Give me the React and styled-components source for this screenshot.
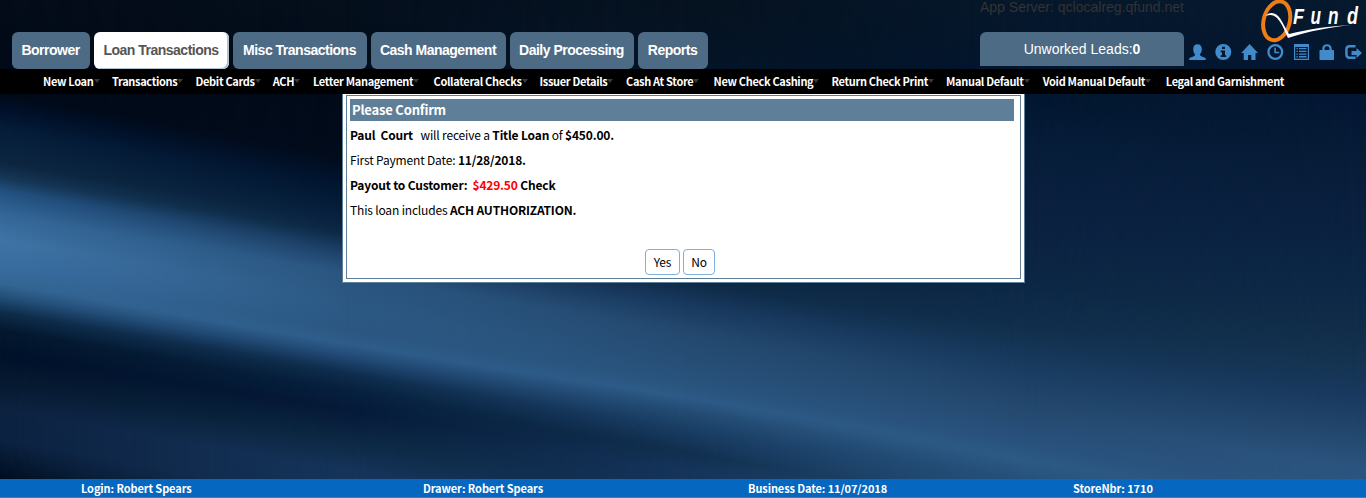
import React from "react";
import styled, { createGlobalStyle } from "styled-components";

const sans = '"Noto Sans CJK SC", sans-serif';
const arial = '"Liberation Sans", Arial, sans-serif';

const Global = createGlobalStyle`
  * { box-sizing: border-box; }
  body { margin: 0; background: #04101f; overflow: hidden; }
`;

const Page = styled.div`
  position: relative;
  display: flex;
  flex-direction: column;
  width: 1366px;
  height: 498px;
  overflow: hidden;
  font-family: ${sans};
`;

const Backdrop = styled.svg`
  position: absolute;
  inset: 0;
  z-index: -1;
`;

const Header = styled.header`
  display: flex;
  justify-content: space-between;
  height: 69px;
`;

const Tabs = styled.nav`
  display: flex;
  align-items: flex-end;
  gap: 4px;
  padding-left: 12px;
`;

const Tab = styled.a`
  display: flex;
  align-items: center;
  justify-content: center;
  width: ${(p) => p.$w}px;
  height: 37px;
  padding: 0 1px 2px 0;
  border-radius: 6px;
  font: bold 14px ${arial};
  letter-spacing: -0.5px;
  white-space: nowrap;
  color: ${(p) => (p.$active ? "#555" : "#fff")};
  background: ${(p) => (p.$active ? "#fff" : "#4d6b85")};
  box-shadow: ${(p) => (p.$active ? "inset -2px -1px 0 #b3c3d0" : "none")};
`;

const Tools = styled.div`
  display: flex;
  width: 386px;
`;

const Server = styled.div`
  display: flex;
  flex-direction: column;
  justify-content: space-between;
  width: 204px;
  height: 66px;
`;

const ServerName = styled.div`
  font: 14px/14px ${arial};
  white-space: nowrap;
  color: #333;
`;

const Leads = styled.div`
  height: 34px;
  border-radius: 6px 6px 0 0;
  background: #4d6b85;
  color: #fff;
  font: 14px/34px ${arial};
  text-align: center;
`;

const Side = styled.div`
  flex: 1;
  display: flex;
  flex-direction: column;
`;

const Logo = styled.svg`
  margin-left: 74px;
  display: block;
`;

const Icons = styled.div`
  display: flex;
  gap: 9px;
  padding: 1px 0 0 5px;
`;

const Icon = styled.svg`
  display: block;
  width: 17px;
  height: 16px;
  flex: none;
  fill: #428bca;
`;

const Menu = styled.nav`
  display: flex;
  height: 25px;
  padding: 0 0 1px 43px;
  background: #000;
`;

const MenuItem = styled.a`
  width: ${(p) => p.$w}px;
  display: flex;
  align-items: center;
  flex: none;
  color: #fff;
  font: bold 11px/24px ${sans};
  letter-spacing: -0.32px;
  white-space: nowrap;
`;

const Caret = styled.i`
  border: 3px solid transparent;
  border-top: 4px solid #383838;
  border-bottom: 0;
`;

const Main = styled.main`
  flex: 1;
  display: flex;
  align-items: flex-start;
  padding-left: 342px;
`;

const Panel = styled.section`
  width: 683px;
  height: 189px;
  padding: 1px 3px 3px;
  border: 1px solid #5f7f99;
  border-top: 0;
  background: #fff;
`;

const Inner = styled.div`
  height: 184px;
  border: 1px solid #5f7f99;
  padding: 3px 6px 0 3px;
  display: flex;
  flex-direction: column;
`;

const Title = styled.h1`
  margin: 0 0 1px;
  height: 22px;
  padding-left: 2px;
  background: #5f7f99;
  color: #fff;
  font: bold 13px/22px ${sans};
  letter-spacing: -0.2px;
`;

const Line = styled.p`
  margin: 0;
  height: 25px;
  font: 12px/25px ${sans};
  letter-spacing: -0.17px;
  white-space: pre;
  color: #000;
`;

const Amount = styled.span`
  color: #f00;
`;

const Actions = styled.div`
  display: flex;
  gap: 3px;
  margin: 27px 0 0 295px;
`;

const Button = styled.button`
  width: ${(p) => p.$w}px;
  height: 26px;
  padding: 0 0 1px;
  border: 1px solid #7fb0dc;
  border-radius: 4px;
  background: #fff;
  color: #000;
  font: 12px/22px ${sans};
  letter-spacing: -0.2px;
`;

const Footer = styled.footer`
  display: flex;
  height: 19px;
  padding-left: 81px;
  background: #0667c0;
  border-bottom: 1px solid #1488f0;
`;

const FooterItem = styled.span`
  width: ${(p) => p.$w}px;
  color: #fff;
  font: bold 11px/19px ${sans};
  letter-spacing: -0.1px;
  white-space: nowrap;
`;

const tabs = [
  ["Borrower", 78], ["Loan Transactions", 135], ["Misc Transactions", 134],
  ["Cash Management", 135], ["Daily Processing", 124], ["Reports", 70],
];

const menu = [
  ["New Loan", 69], ["Transactions", 83.5], ["Debit Cards", 77.2], ["ACH", 40.3],
  ["Letter Management", 120.5], ["Collateral Checks", 106], ["Issuer Details", 86.5],
  ["Cash At Store", 87.5], ["New Check Cashing", 118], ["Return Check Print", 114.5],
  ["Manual Default", 96.8], ["Void Manual Default", 123], ["Legal and Garnishment", 120],
];

// Vertical colour profiles of the light beam, in coordinates sheared along it.
const columns = [
  { x: 0, stops: [[0, "#040c18"], [94, "#010a18"], [108, "#01102a"], [130, "#061e3a"], [162, "#0d2640"], [178, "#163858"], [190, "#22507f"], [215, "#356899"], [240, "#3f74a6"], [262, "#3a6ea2"], [283, "#346694"], [296, "#24507a"], [312, "#0e2c4a"], [330, "#04182e"], [355, "#01112a"], [378, "#05182f"], [410, "#0d2240"], [440, "#0c2240"], [465, "#04152b"], [480, "#010c20"]] },
  { x: 345, stops: [[-50, "#050f1c"], [36, "#010a18"], [100, "#010c1c"], [125, "#01142e"], [155, "#061f3c"], [175, "#0c2844"], [197, "#1f436a"], [215, "#2a5580"], [250, "#2c5984"], [272, "#2b5782"], [286, "#2e5d8a"], [298, "#224a76"], [315, "#0f2d4d"], [332, "#06203e"], [352, "#051a38"], [382, "#0c2843"], [412, "#15345a"]] },
  { x: 683, stops: [[-114, "#06121f"], [-20, "#04162b"], [130, "#081f3c"], [166, "#0d2946"], [188, "#18385d"], [218, "#24496f"], [250, "#274f77"], [270, "#29547e"], [283, "#2d5a87"], [297, "#234b73"], [316, "#193c62"], [338, "#112f4e"], [356, "#15345a"]] },
  { x: 1024, stops: [[-171, "#07182b"], [-77, "#021630"], [-30, "#061d39"], [50, "#0b2140"], [110, "#0b2745"], [156, "#112f4c"], [206, "#1b3f65"], [239, "#25496f"], [273, "#29527e"], [289, "#2c5a85"], [310, "#25507a"]] },
  { x: 1366, stops: [[-228, "#071a2d"], [-134, "#021634"], [-78, "#061c37"], [0, "#0b2140"], [60, "#0c2847"], [102, "#112d49"], [132, "#14334f"], [172, "#1a3a60"], [212, "#25496f"], [242, "#2b5580"]] },
];

function Background() {
  const top = -240;
  const span = 740;
  return (
    <Backdrop width="1366" height="498" viewBox="0 0 1366 498">
      <defs>
        {columns.map((c, i) => (
          <React.Fragment key={c.x}>
            <linearGradient id={`tone${i}`} gradientUnits="userSpaceOnUse" x1="0" x2="0" y1={top} y2={top + span}>
              {c.stops.map(([y, color]) => (
                <stop key={y} offset={(y - top) / span} stopColor={color} />
              ))}
            </linearGradient>
            {i > 0 && (
              <>
                <linearGradient id={`fade${i}`} gradientUnits="userSpaceOnUse" x1={columns[i - 1].x} x2={c.x} y1="0" y2="0">
                  <stop offset="0" stopColor="#fff" stopOpacity="0" />
                  <stop offset="1" stopColor="#fff" />
                </linearGradient>
                <mask id={`mask${i}`} maskUnits="userSpaceOnUse" x="0" y="-300" width="1400" height="900" style={{ maskType: "alpha" }}>
                  <rect x="0" y="-300" width="1400" height="900" fill={`url(#fade${i})`} />
                </mask>
              </>
            )}
          </React.Fragment>
        ))}
      </defs>
      <g transform="matrix(1 0.167 0 1 0 0)">
        {columns.map((c, i) => (
          <rect key={c.x} x="0" y="-300" width="1400" height="900" fill={`url(#tone${i})`} mask={i ? `url(#mask${i})` : undefined} />
        ))}
      </g>
    </Backdrop>
  );
}

const letters = [["F", 1293, 22, 11], ["u", 1310.5, 24, 10.5], ["n", 1328, 24, 10.5], ["d", 1347, 23, 11]];

function QFundLogo() {
  return (
    <Logo width="108" height="43" viewBox="1258 0 108 43">
      <ellipse cx="1276.7" cy="20.8" rx="13" ry="19.800" transform="rotate(15 1276.7 20.8)" fill="none" stroke="#ee7d17" strokeWidth="4" />
      <path d="M1265.500 16c4-5 11-4 15 3 3 5 5 9 8.500 15 20-5 40-8 63-9-22 2-42 6-64 13-2-4-3-7-5.500-12-5-9-9-13-17-10z" fill="#fff" />
      <g fill="#fff" fontFamily="Liberation Sans, sans-serif" fontStyle="italic" fontWeight="bold">
        {letters.map(([ch, x, size, w]) => (
          <text key={ch} x={x} y="24" fontSize={size} textLength={w} lengthAdjust="spacingAndGlyphs">{ch}</text>
        ))}
      </g>
    </Logo>
  );
}

const iconShapes = [
  <path key="user" d="M.3 16v-1.700C.3 13.300 6 12.600 6 10.700 6 9.600 4.200 9 4.200 5.200 4.200 2 5.800.2 8.500.2s4.300 1.800 4.300 5c0 3.800-1.800 4.400-1.800 5.500 0 1.900 5.700 2.600 5.700 3.600V16z" />,
  <path key="info" fillRule="evenodd" d="M8.300 0a8 8 0 1 0 0 16 8 8 0 0 0 0-16zM7 2.800h3v2.300H7zM5.700 6.500H10v4.700h1.200V13H5.700v-1.800H7V8.200H5.700z" />,
  <path key="home" d="M8.600 0 17 9h-2.500v7H10.300v-5H7v5H2.700V9H.2L4.200 4.700z" />,
  <path key="clock" fillRule="evenodd" d="M8.300 0a8 8 0 1 0 0 16 8 8 0 0 0 0-16zm0 2.300a5.700 5.700 0 1 1 0 11.400 5.700 5.700 0 0 1 0-11.400zM7.300 3.800h1.600v3.900h3.300v1.600H7.300z" />,
  <path key="list" fillRule="evenodd" d="M1 0h15v16H1zM2.200 3v11.800h12.600V3zM3.500 4h1.300v1.300H3.500zM6 4h7.500v1.300H6zM3.500 6.700h1.300V8H3.500zM6 6.700h7.500V8H6zM3.500 9.400h1.300v1.300H3.500zM6 9.400h7.500v1.300H6zM3.500 12.100h1.300v1.300H3.500zM6 12.100h7.500v1.300H6z" />,
  <path key="lock" fillRule="evenodd" d="M3.300 6V4.500C3.300 1.800 5 .2 8 .2s4.700 1.600 4.700 4.300V6H14c.7 0 1 .3 1 1v8c0 .7-.3 1-1 1H1.500c-.7 0-1-.3-1-1V7c0-.7.3-1 1-1zM5.600 6h4.800V4.500c0-1.400-.8-2.200-2.400-2.200s-2.400.8-2.400 2.200z" />,
  <path key="out" d="M10.500 1H4.500C1.800 1 .2 2.600.2 5.200v5.600C.2 13.400 1.800 15 4.500 15h6v-2.500H4.700c-1.300 0-2-.7-2-2v-5c0-1.300.7-2 2-2h5.800zM11.500 4v3H6.500v4h5v3l5.500-5z" />,
];

export default function App() {
  return (
    <Page>
      <Global />
      <Background />
      <Header>
        <Tabs>
          {tabs.map(([label, w], i) => <Tab key={label} $w={w} $active={i === 1}>{label}</Tab>)}
        </Tabs>
        <Tools>
          <Server>
            <ServerName>App Server: qclocalreg.qfund.net</ServerName>
            <Leads>Unworked Leads:<b>0</b></Leads>
          </Server>
          <Side>
            <QFundLogo />
            <Icons>
              {iconShapes.map((shape) => <Icon key={shape.key} viewBox="0 0 17 16">{shape}</Icon>)}
            </Icons>
          </Side>
        </Tools>
      </Header>
      <Menu>
        {menu.map(([label, w], i) => (
          <MenuItem key={label} $w={w}>{label}{i < 12 && <Caret />}</MenuItem>
        ))}
      </Menu>
      <Main>
        <Panel>
          <Inner>
            <Title>Please Confirm</Title>
            <Line><b>Paul  Court</b>   will receive a <b>Title Loan</b> of <b>$450.00.</b></Line>
            <Line>First Payment Date: <b>11/28/2018.</b></Line>
            <Line><b>Payout to Customer:  <Amount>$429.50</Amount> Check</b></Line>
            <Line>This loan includes <b>ACH AUTHORIZATION.</b></Line>
            <Actions>
              <Button $w={35}>Yes</Button>
              <Button $w={32}>No</Button>
            </Actions>
          </Inner>
        </Panel>
      </Main>
      <Footer>
        <FooterItem $w={342}>Login: Robert Spears</FooterItem>
        <FooterItem $w={325}>Drawer: Robert Spears</FooterItem>
        <FooterItem $w={325}>Business Date: 11/07/2018</FooterItem>
        <FooterItem $w={200}>StoreNbr: 1710</FooterItem>
      </Footer>
    </Page>
  );
}
